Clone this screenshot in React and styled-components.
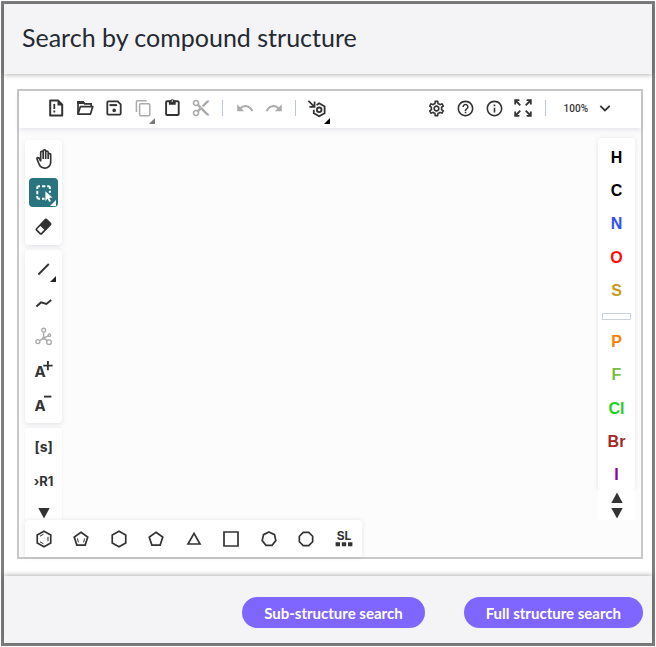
import React from 'react';
import styled, { createGlobalStyle } from 'styled-components';
import { MdContentCut, MdHelpOutline, MdInfoOutline, MdOutlineBackHand, MdOutlineSettings } from 'react-icons/md';

const GlobalStyle = createGlobalStyle`
  * {
    box-sizing: border-box;
  }
  body {
    margin: 0;
    background-color: #ffffff;
    font-family: Lato, 'Liberation Sans', sans-serif;
  }
`;

const Dialog = styled.main`
  display: flex;
  flex-direction: column;
  min-height: calc(100vh - 2px);
  margin: 1px;
  border: 3px solid #7f7f7f;
  background-color: #ffffff;
`;

const Header = styled.header`
  display: flex;
  align-items: center;
  height: 70px;
  padding: 0 18px 4px;
  background-color: #f4f4f6;
  box-shadow: 0 1px 5px 0 rgba(0, 0, 0, 0.3);
`;

const Title = styled.h1`
  margin: 0;
  font-size: 25px;
  font-weight: 400;
  line-height: 32px;
  color: #252932;
`;

const Body = styled.div`
  display: flex;
  flex: 1;
  padding: 15px 9px 17px 13px;
`;

const Footer = styled.footer`
  display: flex;
  justify-content: flex-end;
  gap: 39px;
  height: 67px;
  padding: 21px 9px 0;
  background-color: #f4f4f6;
  box-shadow: 0 -1px 5px 0 rgba(0, 0, 0, 0.3);
`;

const SearchButton = styled.button`
  height: 31px;
  padding: 0 22px;
  border: none;
  border-radius: 16px;
  background-color: #7f66ff;
  color: #ffffff;
  font-family: inherit;
  font-size: 15px;
  font-weight: 700;
  cursor: pointer;
`;

const Editor = styled.section`
  display: flex;
  flex-direction: column;
  flex: 1;
  border: 2px solid #c8c8c8;
  background-color: #fcfcfc;
`;

const TopBar = styled.div`
  display: flex;
  align-items: center;
  height: 37px;
  padding: 0 22px 3px;
  background-color: #ffffff;
  box-shadow: 0 2px 5px 0 rgba(103, 104, 132, 0.15);
`;

const Spacer = styled.div`
  flex: 1;
`;

const Divider = styled.span`
  width: 1px;
  height: 16px;
  margin: 0 7px;
  background-color: #bcc3dc;
`;

const ToolButton = styled.button`
  display: flex;
  align-items: center;
  justify-content: center;
  flex: none;
  position: relative;
  width: 29px;
  height: 29px;
  padding: 0;
  border: none;
  border-radius: 4px;
  background: none;
  color: ${p => (p.disabled ? '#ababab' : '#333333')};
  cursor: pointer;
  ${p => p.$selected && `
    background-color: #2a7480;
    color: #ffffff;
  `}
`;

const Corner = styled.span`
  position: absolute;
  right: 2px;
  bottom: 1px;
  border-left: 6px solid transparent;
  border-bottom: 6px solid ${p => p.$color || '#222222'};
  ${p => p.$outside && `
    bottom: -1px;
  `}
`;

const ZoomButton = styled.button`
  display: flex;
  align-items: center;
  gap: 11px;
  height: 29px;
  padding: 0 8px 0 11px;
  border: none;
  background: none;
  color: #333333;
  font-family: Roboto, 'Liberation Sans', sans-serif;
  font-size: 10px;
  font-weight: 500;
  cursor: pointer;
`;

const Workspace = styled.div`
  display: flex;
  justify-content: space-between;
  flex: 1;
  padding: 0 6px;
`;

const LeftColumn = styled.div`
  display: flex;
  flex-direction: column;
  gap: 5px;
  width: 37px;
  padding-top: 12px;
`;

const RightColumn = styled.div`
  display: flex;
  flex-direction: column;
  width: 37px;
  padding-top: 10px;
`;

const Group = styled.div`
  display: flex;
  flex-direction: column;
  gap: 5px;
  padding: 4px;
  border-radius: 4px;
  background-color: #ffffff;
  box-shadow: 0 2px 5px 0 rgba(103, 104, 132, 0.15);
  ${p => p.$open && `
    flex: 1;
    padding-bottom: 0;
    border-radius: 4px 4px 0 0;
    box-shadow: 0 0 3px 0 rgba(103, 104, 132, 0.08);
  `}
`;

const ScrollButton = styled.button`
  display: flex;
  align-items: center;
  justify-content: center;
  width: 29px;
  height: 15px;
  padding: 0;
  border: none;
  background: none;
  color: #333333;
  cursor: pointer;
`;

const ScrollDown = styled(ScrollButton)`
  margin-top: auto;
`;

const Atoms = styled.div`
  display: flex;
  flex-direction: column;
  align-items: center;
  justify-content: space-between;
  flex: 1;
  padding-top: 5px;
  border-radius: 4px;
  background-color: #ffffff;
  box-shadow: 0 0 5px 0 rgba(103, 104, 132, 0.15);
`;

const AtomButton = styled(ToolButton)`
  color: ${p => p.$color};
  font-family: 'Liberation Sans', sans-serif;
  font-size: 16px;
  font-weight: 700;
`;

const AtomDivider = styled.span`
  width: 29px;
  height: 7px;
  margin: 3px 0;
  border: 1px solid #cad3dd;
`;

const AtomScroll = styled.div`
  display: flex;
  flex-direction: column;
  align-items: center;
  position: relative;
  background-color: #ffffff;
`;

const BottomBar = styled.div`
  display: flex;
  padding: 0 6px;
`;

const Templates = styled.div`
  display: flex;
  align-items: center;
  justify-content: space-between;
  width: 337px;
  height: 37px;
  padding: 0 4px;
  border-radius: 4px 4px 0 0;
  background-color: #ffffff;
  box-shadow: 0 0 5px 0 rgba(103, 104, 132, 0.15);
`;

const Icon = ({size = 20, children, ...p}) => (
  <svg
    width={size}
    height={size}
    viewBox={`0 0 ${size} ${size}`}
    fill="none"
    stroke="currentColor"
    strokeWidth="1.7"
    aria-hidden="true"
    {...p}
  >
    {children}
  </svg>
);

const Label = ({children, ...p}) => (
  <text
    fill="currentColor"
    stroke="none"
    fontFamily="Inter, sans-serif"
    fontWeight="700"
    {...p}
  >
    {children}
  </text>
);

const NewIcon = () => (
  <Icon strokeWidth="2">
    <path d="M4.2 2.6h8l4 4v10.8h-12z" strokeLinejoin="round" />
    <path d="M11.5 2.5v5h5z" fill="currentColor" stroke="none" />
    <path d="M8.3 6v5M8.3 12.5v2" strokeWidth="1.8" />
  </Icon>
);

const OpenIcon = () => (
  <Icon>
    <path d="M3 16V3.8h5l1.6 2h6.6v2.6" />
    <path d="M3 16.2l2.4-7.6h12.4l-2.4 7.6z" strokeLinejoin="round" />
    <path d="M2.2 3h6l2 3H2.2z" fill="currentColor" stroke="none" />
  </Icon>
);

const SaveIcon = () => (
  <Icon strokeWidth="1.8">
    <path d="M4.3 3.4h9.4l3 3v9.2a1 1 0 0 1-1 1H4.3a1 1 0 0 1-1-1V4.4a1 1 0 0 1 1-1z" />
    <path d="M5.5 7.1h7.5" strokeWidth="2" />
    <circle cx="10.2" cy="12.4" r="1.8" fill="currentColor" stroke="none" />
  </Icon>
);

const CopyIcon = () => (
  <Icon strokeWidth="1.5">
    <path d="M3.4 14V3.8a1 1 0 0 1 1-1h9.2" />
    <rect x="6.6" y="5.8" width="10.2" height="12" rx="1" />
  </Icon>
);

const PasteIcon = () => (
  <Icon strokeWidth="1.9">
    <rect x="4.1" y="3.3" width="12.6" height="13.7" rx="1" />
    <path d="M6.9 2.6h1.6a1.9 1.9 0 0 1 3.6 0h1.6v4.2H6.9z" fill="currentColor" stroke="none" />
    <circle cx="10.3" cy="3" r="0.8" fill="#ffffff" stroke="none" />
  </Icon>
);

const UndoIcon = p => (
  <Icon strokeWidth="2" {...p}>
    <path d="M17.4 13.2C14.8 7.4 9 6.6 5 10.6" />
    <path d="M2.2 6.2v7h7z" fill="currentColor" stroke="none" />
  </Icon>
);

const AromatizeIcon = () => (
  <Icon size={22} strokeWidth="1.8">
    <path d="M9.6 7.9l2.6-1.6 5.4 3.2v6.8l-5.4 3-5.4-3v-3.6" />
    <circle cx="12.2" cy="12.8" r="2.3" />
    <path d="M1.4 3.8L7 9.4M7.6 4.6v5.3H2.4" strokeWidth="1.7" />
  </Icon>
);

const FullscreenIcon = () => (
  <Icon strokeWidth="1.8">
    <path d="M2.2 6.4V2.2h4.2M13.6 2.2h4.2v4.2M17.8 13.6v4.2h-4.2M6.4 17.8H2.2v-4.2" />
    <path d="M2.5 2.5l4.8 4.8M17.5 2.5l-4.8 4.8M17.5 17.5l-4.8-4.8M2.5 17.5l4.8-4.8" />
  </Icon>
);

const ChevronIcon = () => (
  <Icon size={12} strokeWidth="1.8">
    <path d="M1.3 3.8L6 8.5l4.7-4.7" />
  </Icon>
);

const SelectIcon = () => (
  <Icon strokeWidth="2">
    <path d="M3.3 6V4.8a1.5 1.5 0 0 1 1.5-1.5H6M8 3.3h3.4M13.2 3.3h1.2a1.5 1.5 0 0 1 1.5 1.5V6M15.9 7.8v2M3.3 7.8v3.4M3.3 13v1.2a1.5 1.5 0 0 0 1.5 1.5H6M8 15.7h2.6" />
    <path d="M11.4 8.2l7 6.4-3.1.3 1.7 3-1.8 1-1.6-3.1-2.2 2.1z" fill="currentColor" stroke="none" />
  </Icon>
);

const EraserIcon = () => (
  <Icon>
    <g transform="rotate(-46 10 10)">
      <rect x="2.6" y="5.9" width="14.4" height="7" rx="1" />
      <rect x="8.2" y="5.4" width="9.4" height="8" rx="1" fill="currentColor" stroke="none" />
    </g>
  </Icon>
);

const BondIcon = () => (
  <Icon>
    <path d="M4.4 15.5L14.8 5" strokeWidth="1.9" />
  </Icon>
);

const ChainIcon = () => (
  <Icon>
    <path d="M2.4 13.4l4.6-4 5.4 1.6 4.8-4" strokeWidth="2" />
  </Icon>
);

const MoleculeIcon = () => (
  <Icon strokeWidth="1.4">
    <circle cx="9.6" cy="3.2" r="1.9" />
    <circle cx="3.9" cy="14.6" r="2" />
    <circle cx="15" cy="15.2" r="2.3" />
    <circle cx="15.4" cy="8.2" r="1.2" />
    <path d="M9.6 5.2v4.2M8.6 11.6l-3 2M10.6 11.6l2.8 2M11 10.4l3.4-1.6M8.2 12l1.4-2.6 1.6 2.6z" />
  </Icon>
);

const ChargeIcon = ({plus}) => (
  <Icon size={22} strokeWidth="1.9">
    <Label x="1.4" y="17" fontSize="15">A</Label>
    <path d={plus ? 'M10.2 5.6h9.4M14.9 0.9v9.4' : 'M11 2.6h7.4'} />
  </Icon>
);

const TextIcon = ({children, ...p}) => (
  <Icon size={24}>
    <Label x="11.6" y="16.6" textAnchor="middle" fontSize="14" {...p}>{children}</Label>
  </Icon>
);

const TriangleIcon = ({up}) => (
  <Icon size={12} fill="currentColor" stroke="none">
    <path d={up ? 'M6 0.5l5.7 10.5H.3z' : 'M6 11.5L.3 1h11.4z'} />
  </Icon>
);

// regular polygon around the icon centre, first vertex at the given angle
const polygon = (sides, radius, start = -90, cy = 10) =>
  Array.from({length: sides}, (_, i) => {
    const a = ((start + (360 / sides) * i) * Math.PI) / 180;
    return `${(10 + radius * Math.cos(a)).toFixed(2)},${(cy + radius * Math.sin(a)).toFixed(2)}`;
  }).join(' ');

const RingIcon = ({points, inner}) => (
  <Icon>
    <polygon points={points} />
    {inner && <path d={inner} strokeWidth="1" />}
  </Icon>
);

const SaltsIcon = () => (
  <Icon size={26}>
    <Label x="13" y="14" textAnchor="middle" fontSize="12">SL</Label>
    <path d="M4.6 16.2H9v4H4.6zM10.8 16.2h4.4v4h-4.4zM17 16.2h4.4v4H17z" fill="currentColor" stroke="none" />
  </Icon>
);

const templates = [
  {name: 'Benzene', points: polygon(6, 7.8), inner: 'M9.5 5.2L6 7.2M6 12.8l3.5 2M14 7.8v4.4'},
  {name: 'Cyclopentadiene', points: polygon(5, 7.1, -90, 10.3), inner: 'M6.4 9.4l1 4M13.6 9.4l-1 4'},
  {name: 'Cyclohexane', points: polygon(6, 7.8)},
  {name: 'Cyclopentane', points: polygon(5, 7.1, -90, 10.3)},
  {name: 'Cyclopropane', points: '10,4.4 16,15 4,15'},
  {name: 'Cyclobutane', points: '3,3 17,3 17,17 3,17'},
  {name: 'Cycloheptane', points: polygon(7, 7)},
  {name: 'Cyclooctane', points: polygon(8, 7.2, -67.5)},
];

const lightAtoms = [
  ['H', '#000000'],
  ['C', '#000000'],
  ['N', '#304ff7'],
  ['O', '#ff0d0d'],
  ['S', '#c99a19'],
];

const heavyAtoms = [
  ['P', '#ff8000'],
  ['F', '#78bc42'],
  ['Cl', '#1fd01f'],
  ['Br', '#a62929'],
  ['I', '#940094'],
];

const Tool = ({name, children, ...p}) => (
  <ToolButton type="button" aria-label={name} {...p}>
    {children}
  </ToolButton>
);

const Atom = ({symbol, color}) => (
  <AtomButton type="button" $color={color}>{symbol}</AtomButton>
);

const App = () => {
  return (
    <>
      <GlobalStyle />
      <Dialog>
        <Header>
          <Title>Search by compound structure</Title>
        </Header>
        <Body>
          <Editor>
            <TopBar>
              <Tool name="Clear canvas"><NewIcon /></Tool>
              <Tool name="Open"><OpenIcon /></Tool>
              <Tool name="Save as"><SaveIcon /></Tool>
              <Tool name="Copy" disabled><CopyIcon /><Corner $outside $color="#777777" /></Tool>
              <Tool name="Paste"><PasteIcon /></Tool>
              <Tool name="Cut" disabled><MdContentCut size={20} /></Tool>
              <Divider />
              <Tool name="Undo" disabled><UndoIcon /></Tool>
              <Tool name="Redo" disabled><UndoIcon transform="scale(-1 1)" /></Tool>
              <Divider />
              <Tool name="Aromatize"><AromatizeIcon /><Corner $outside $color="#000000" /></Tool>
              <Spacer />
              <Tool name="Settings"><MdOutlineSettings size={19} /></Tool>
              <Tool name="Help"><MdHelpOutline size={19} /></Tool>
              <Tool name="About"><MdInfoOutline size={19} /></Tool>
              <Tool name="Fullscreen mode"><FullscreenIcon /></Tool>
              <Divider />
              <ZoomButton type="button">100%<ChevronIcon /></ZoomButton>
            </TopBar>
            <Workspace>
              <LeftColumn>
                <Group>
                  <Tool name="Hand tool"><MdOutlineBackHand size={20} /></Tool>
                  <Tool name="Rectangle selection" $selected><SelectIcon /><Corner $color="#ffffff" /></Tool>
                  <Tool name="Erase"><EraserIcon /></Tool>
                </Group>
                <Group>
                  <Tool name="Single bond"><BondIcon /><Corner /></Tool>
                  <Tool name="Chain"><ChainIcon /></Tool>
                  <Tool name="Stereochemistry" disabled><MoleculeIcon /></Tool>
                  <Tool name="Charge plus"><ChargeIcon plus /></Tool>
                  <Tool name="Charge minus"><ChargeIcon /></Tool>
                </Group>
                <Group $open>
                  <Tool name="S-Group"><TextIcon>[s]</TextIcon></Tool>
                  <Tool name="R-Group label"><TextIcon fontSize="13">›R1</TextIcon></Tool>
                  <ScrollDown type="button" aria-label="Scroll tools down"><TriangleIcon /></ScrollDown>
                </Group>
              </LeftColumn>
              <RightColumn>
                <Atoms>
                  {lightAtoms.map(([symbol, color]) => <Atom key={symbol} symbol={symbol} color={color} />)}
                  <AtomDivider />
                  {heavyAtoms.map(([symbol, color]) => <Atom key={symbol} symbol={symbol} color={color} />)}
                </Atoms>
                <AtomScroll>
                  <ScrollButton type="button" aria-label="Scroll atoms up"><TriangleIcon up /></ScrollButton>
                  <ScrollButton type="button" aria-label="Scroll atoms down"><TriangleIcon /></ScrollButton>
                </AtomScroll>
              </RightColumn>
            </Workspace>
            <BottomBar>
              <Templates>
                {templates.map(t => (
                  <Tool key={t.name} name={t.name}><RingIcon points={t.points} inner={t.inner} /></Tool>
                ))}
                <Tool name="Salts and solvents"><SaltsIcon /></Tool>
              </Templates>
            </BottomBar>
          </Editor>
        </Body>
        <Footer>
          <SearchButton type="button">Sub-structure search</SearchButton>
          <SearchButton type="button">Full structure search</SearchButton>
        </Footer>
      </Dialog>
    </>
  );
};

export default App;
